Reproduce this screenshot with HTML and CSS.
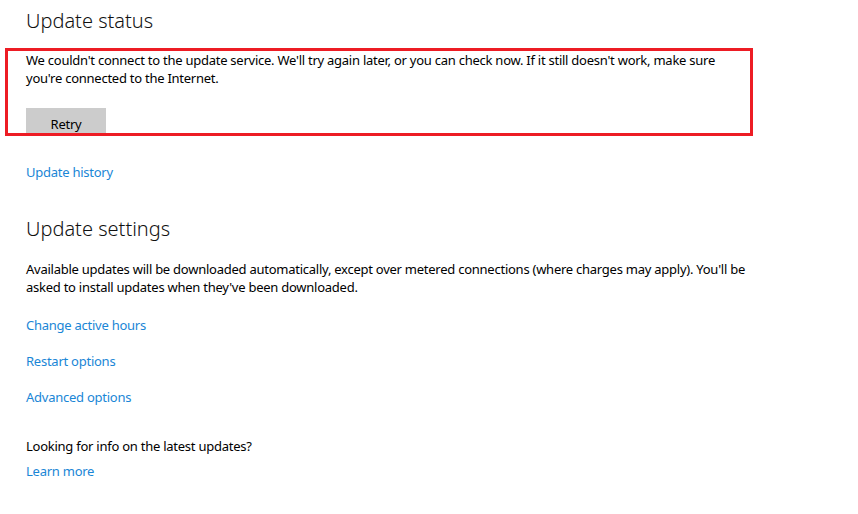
FILE: index.html
```html
<!DOCTYPE html>
<html>
	<head>
		<meta charset="utf-8"/>
		<title>Windows Update</title>
		<link rel="stylesheet" href="styles.css">
	</head>
	<body>
		<main>
			<section class="status">
				<h2>Update status</h2>
				<div class="alert">
					<p>We couldn't connect to the update service. We'll try again later, or you can check now. If it still doesn't work, make sure you're connected to the Internet.</p>
					<button class="retry">Retry</button>
				</div>
				<a class="link history" href="#">Update history</a>
			</section>
			<section class="settings">
				<h2>Update settings</h2>
				<p class="summary">Available updates will be downloaded automatically, except over metered connections (where charges may apply). You'll be asked to install updates when they've been downloaded.</p>
				<ul class="links">
					<li><a class="link" href="#">Change active hours</a></li>
					<li><a class="link" href="#">Restart options</a></li>
					<li><a class="link" href="#">Advanced options</a></li>
				</ul>
				<p class="info">Looking for info on the latest updates?</p>
				<a class="link" href="#">Learn more</a>
			</section>
		</main>
	</body>
</html>
```

FILE: styles.css
```css
body {
	margin: 0;
	background: #fff;
	color: #000;
	font-family: 'Noto Sans', 'Open Sans', sans-serif;
	font-size: 13px;
	letter-spacing: -0.25px;
	line-height: 18px;
}
main {
	padding: 0 5px;
}
section {
	padding-left: 21px;
}
h2 {
	font-weight: 300;
	font-size: 20px;
	letter-spacing: 0;
	line-height: 28px;
	margin: 7px 0 13px 0;
	color: #111;
}
p {
	margin: 0;
}
.alert {
	margin-left: -21px;
	width: 724px;
	height: 82px;
	border: 3px solid #ed1c24;
	padding: 0 0 0 18px;
	overflow: hidden;
}
.retry {
	display: block;
	margin-top: 21px;
	width: 80px;
	height: 32px;
	border: none;
	background: #cccccc;
	font-family: inherit;
	font-size: 13px;
	letter-spacing: -0.25px;
	color: #000;
	padding: 0;
}
.link {
	color: #1a86d6;
	text-decoration: none;
}
.history {
	display: block;
	margin-top: 27px;
}
.settings h2 {
	margin-top: 34px;
	margin-bottom: 17px;
}
.summary {
	max-width: 740px;
}
.links {
	list-style: none;
	margin: 20px 0 0 0;
	padding: 0;
	display: flex;
	flex-direction: column;
	gap: 18px;
}
.info {
	margin-top: 31px;
	margin-bottom: 7px;
}
```
